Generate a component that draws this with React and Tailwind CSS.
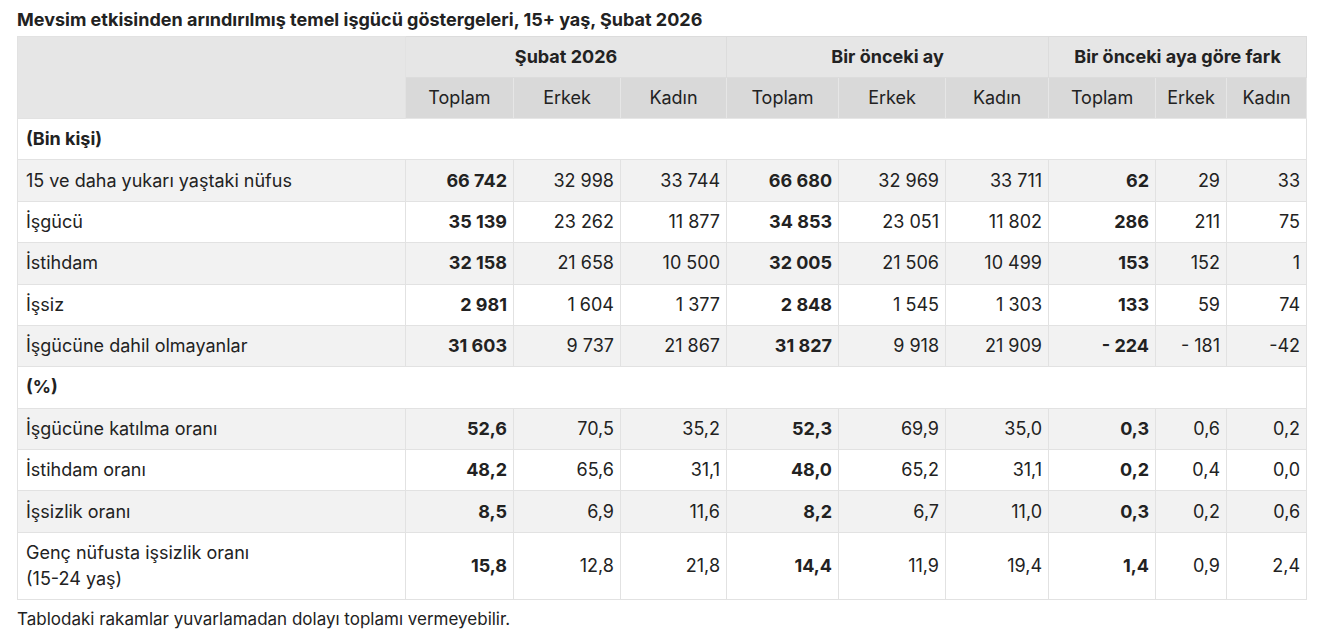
const groups = ["Şubat 2026", "Bir önceki ay", "Bir önceki aya göre fark"];
const subs = ["Toplam", "Erkek", "Kadın"];

const rows = [
  { section: "(Bin kişi)" },
  { label: "15 ve daha yukarı yaştaki nüfus", values: ["66 742", "32 998", "33 744", "66 680", "32 969", "33 711", "62", "29", "33"] },
  { label: "İşgücü", values: ["35 139", "23 262", "11 877", "34 853", "23 051", "11 802", "286", "211", "75"] },
  { label: "İstihdam", values: ["32 158", "21 658", "10 500", "32 005", "21 506", "10 499", "153", "152", "1"] },
  { label: "İşsiz", values: ["2 981", "1 604", "1 377", "2 848", "1 545", "1 303", "133", "59", "74"] },
  { label: "İşgücüne dahil olmayanlar", values: ["31 603", "9 737", "21 867", "31 827", "9 918", "21 909", "- 224", "- 181", "-42"] },
  { section: "(%)" },
  { label: "İşgücüne katılma oranı", values: ["52,6", "70,5", "35,2", "52,3", "69,9", "35,0", "0,3", "0,6", "0,2"] },
  { label: "İstihdam oranı", values: ["48,2", "65,6", "31,1", "48,0", "65,2", "31,1", "0,2", "0,4", "0,0"] },
  { label: "İşsizlik oranı", values: ["8,5", "6,9", "11,6", "8,2", "6,7", "11,0", "0,3", "0,2", "0,6"] },
  { label: ["Genç nüfusta işsizlik oranı", "(15-24 yaş)"], values: ["15,8", "12,8", "21,8", "14,4", "11,9", "19,4", "1,4", "0,9", "2,4"] },
];

const widths = ["w-[388px]", "w-[108px]", "w-[107px]", "w-[106px]", "w-[112px]", "w-[107px]", "w-[103px]", "w-[107px]", "w-[71px]", "w-[80px]"];

export default function App() {
  let stripe = 0;
  return (
    <main className="min-h-screen bg-white px-[17px] pt-[7px] text-[#222] font-['Inter',sans-serif] text-[18px] leading-[26px]">
      <h2 className="mb-[3px] text-[18px] font-bold leading-[26px]">
        Mevsim etkisinden arındırılmış temel işgücü göstergeleri, 15+ yaş, Şubat 2026
      </h2>
      <table className="w-[1289px] table-fixed border-collapse border border-[#e2e2e2]">
        <colgroup>
          {widths.map((w, i) => (
            <col key={i} className={w} />
          ))}
        </colgroup>
        <thead>
          <tr className="bg-[#e6e6e6]">
            <th rowSpan={2} className="border border-[#e2e2e2]" />
            {groups.map((g) => (
              <th key={g} colSpan={3} className="border border-[#dcdcdc] py-[7px] text-center font-bold">
                {g}
              </th>
            ))}
          </tr>
          <tr className="bg-[#d9d9d9]">
            {groups.map((g) =>
              subs.map((s) => (
                <th key={g + s} className="border border-[#e6e6e6] py-[7px] text-center font-normal">
                  {s}
                </th>
              ))
            )}
          </tr>
        </thead>
        <tbody>
          {rows.map((row, r) => {
            if (row.section) {
              stripe = 0;
              return (
                <tr key={r} className="bg-white">
                  <td colSpan={10} className="border border-[#e2e2e2] px-2 py-[7.2px] font-bold">
                    {row.section}
                  </td>
                </tr>
              );
            }
            stripe += 1;
            const bg = stripe % 2 === 1 ? "bg-[#f2f2f2]" : "bg-white";
            return (
              <tr key={r} className={bg}>
                <td className="border border-[#e2e2e2] px-2 py-[7.2px]">
                  {Array.isArray(row.label) ? (
                    <>
                      {row.label[0]}
                      <br />
                      {row.label[1]}
                    </>
                  ) : (
                    row.label
                  )}
                </td>
                {row.values.map((v, i) => (
                  <td
                    key={i}
                    className={`border border-[#e2e2e2] py-[7.2px] pr-[6px] text-right ${i % 3 === 0 ? "font-bold" : ""}`}
                  >
                    {v}
                  </td>
                ))}
              </tr>
            );
          })}
        </tbody>
      </table>
      <p className="mt-[7px] text-[17px] leading-[24px]">Tablodaki rakamlar yuvarlamadan dolayı toplamı vermeyebilir.</p>
    </main>
  );
}
